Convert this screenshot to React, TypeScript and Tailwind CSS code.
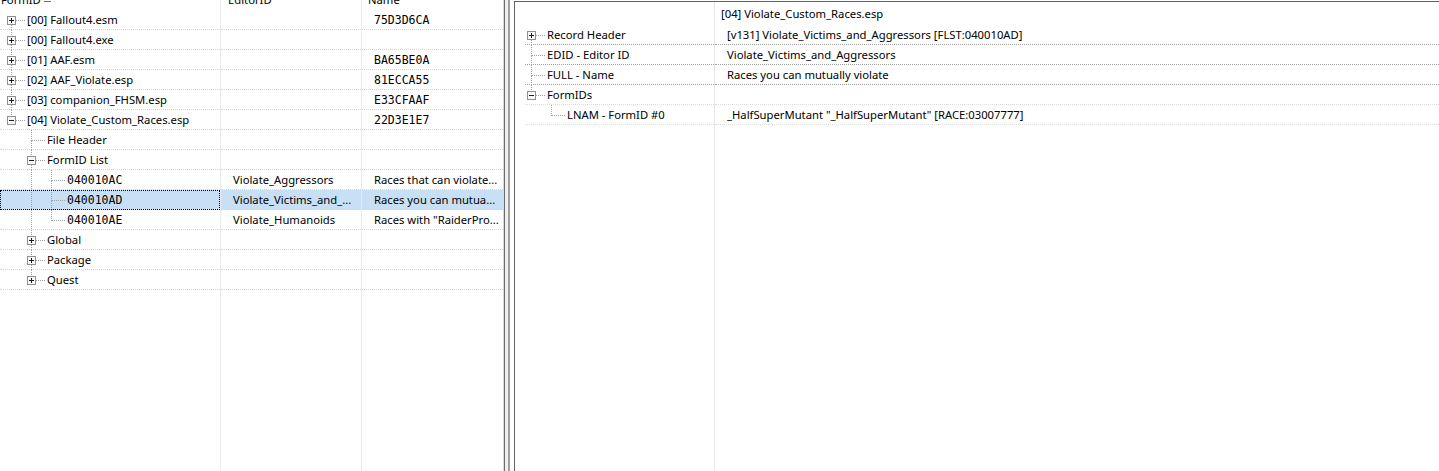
import React from "react";

type TreeProps = {
  level: number;
  box?: "plus" | "minus";
  first?: boolean;
  last?: boolean;
  anc: boolean[];
  base: number;
};

function Gutter({ level, box, first, last, anc, base }: TreeProps) {
  const c = base + 20 * level;
  const w = c + 16;
  const cx = c + 0.5;
  const dot = {
    stroke: "#a0a0a0",
    strokeDasharray: "1 1",
    strokeWidth: 1,
    shapeRendering: "crispEdges" as const,
  };
  return (
    <svg width={w} height={19} className="shrink-0 overflow-visible">
      {anc.map((on, i) =>
        on ? (
          <line key={i} x1={base + 20 * i + 0.5} y1={0} x2={base + 20 * i + 0.5} y2={20} {...dot} />
        ) : null
      )}
      {!(level === 0 && first) && <line x1={cx} y1={0} x2={cx} y2={box ? 6 : 11} {...dot} />}
      {!last && <line x1={cx} y1={box ? 15 : 11} x2={cx} y2={20} {...dot} />}
      <line x1={box ? c + 5 : c + 1} y1={10.5} x2={c + 14} y2={10.5} {...dot} />
      {box && (
        <g shapeRendering="crispEdges">
          <rect x={c - 3.5} y={6.5} width={8} height={8} fill="#f7f7f7" stroke="#8f8f8f" />
          <line x1={c - 2} y1={10.5} x2={c + 3} y2={10.5} stroke="#1c1c2c" />
          {box === "plus" && <line x1={cx} y1={8} x2={cx} y2={13} stroke="#1c1c2c" />}
        </g>
      )}
    </svg>
  );
}

type LeftRow = {
  label: string;
  level: number;
  box?: "plus" | "minus";
  first?: boolean;
  last?: boolean;
  anc: boolean[];
  mono?: boolean;
  ed?: string;
  name?: string;
  nameMono?: boolean;
  selected?: boolean;
};

const leftRows: LeftRow[] = [
  { label: "[00] Fallout4.esm", level: 0, box: "plus", first: true, anc: [], name: "75D3D6CA", nameMono: true },
  { label: "[00] Fallout4.exe", level: 0, box: "plus", anc: [] },
  { label: "[01] AAF.esm", level: 0, box: "plus", anc: [], name: "BA65BE0A", nameMono: true },
  { label: "[02] AAF_Violate.esp", level: 0, box: "plus", anc: [], name: "81ECCA55", nameMono: true },
  { label: "[03] companion_FHSM.esp", level: 0, box: "plus", anc: [], name: "E33CFAAF", nameMono: true },
  { label: "[04] Violate_Custom_Races.esp", level: 0, box: "minus", last: true, anc: [], name: "22D3E1E7", nameMono: true },
  { label: "File Header", level: 1, anc: [false] },
  { label: "FormID List", level: 1, box: "minus", anc: [false] },
  { label: "040010AC", level: 2, anc: [false, true], mono: true, ed: "Violate_Aggressors", name: "Races that can violate..." },
  { label: "040010AD", level: 2, anc: [false, true], mono: true, ed: "Violate_Victims_and_...", name: "Races you can mutua...", selected: true },
  { label: "040010AE", level: 2, last: true, anc: [false, true], mono: true, ed: "Violate_Humanoids", name: "Races with \"RaiderPro..." },
  { label: "Global", level: 1, box: "plus", anc: [false] },
  { label: "Package", level: 1, box: "plus", anc: [false] },
  { label: "Quest", level: 1, box: "plus", last: true, anc: [false] },
];

const SEL = "bg-[#c8e0f6]";
const MONO = "font-['DejaVu_Sans_Mono',monospace] text-[11.5px] pt-[2px]";

function HeaderCell({ children, pl }: { children?: React.ReactNode; pl: string }) {
  return (
    <div className="h-[10px] shrink-0 overflow-hidden">
      <div className={`-mt-[12px] flex h-[23px] items-center whitespace-nowrap ${pl}`}>{children}</div>
    </div>
  );
}

function LeftPanel() {
  return (
    <div className="flex h-full w-[504px] shrink-0 border-r border-[#dadada]">
      {/* FormID column */}
      <div className="flex w-[221px] shrink-0 flex-col border-r border-[#ebebeb]">
        <HeaderCell pl="pl-px">
          <span>FormID</span>
          <span className="ml-[3px] h-[5px] w-[7px] self-center border-b border-[#6d6d6d]" />
        </HeaderCell>
        {leftRows.map((r, i) => (
          <div
            key={i}
            className={`flex h-[20px] shrink-0 items-center border-b border-dotted border-[#d6d6d6] whitespace-nowrap ${
              r.selected ? `${SEL} outline-1 -outline-offset-1 outline-dotted outline-black` : ""
            }`}
          >
            <Gutter level={r.level} box={r.box} first={r.first} last={r.last} anc={r.anc} base={11} />
            <span className={r.mono ? MONO : ""}>{r.label}</span>
          </div>
        ))}
      </div>
      {/* EditorID column */}
      <div className="flex w-[141px] shrink-0 flex-col border-r border-[#ebebeb]">
        <HeaderCell pl="pl-[7px]">EditorID</HeaderCell>
        {leftRows.map((r, i) => (
          <div
            key={i}
            className={`flex h-[20px] shrink-0 items-center border-b border-dotted border-[#d6d6d6] pl-[12px] whitespace-nowrap ${
              r.selected ? SEL : ""
            }`}
          >
            {r.ed ?? ""}
          </div>
        ))}
      </div>
      {/* Name column */}
      <div className="flex min-w-0 flex-1 flex-col">
        <HeaderCell pl="pl-[6px]">Name</HeaderCell>
        {leftRows.map((r, i) => (
          <div
            key={i}
            className={`flex h-[20px] shrink-0 items-center border-b border-dotted border-[#d6d6d6] pl-[12px] whitespace-nowrap ${
              r.selected ? SEL : ""
            }`}
          >
            <span className={r.nameMono ? MONO : ""}>{r.name ?? ""}</span>
          </div>
        ))}
      </div>
    </div>
  );
}

type RightRow = {
  label: string;
  value: string;
  level: number;
  box?: "plus" | "minus";
  first?: boolean;
  last?: boolean;
  anc: boolean[];
  line: string;
};

const rightRows: RightRow[] = [
  { label: "Record Header", value: "[v131] Violate_Victims_and_Aggressors [FLST:040010AD]", level: 0, box: "plus", first: true, anc: [], line: "border-[#a0a0a0]" },
  { label: "EDID - Editor ID", value: "Violate_Victims_and_Aggressors", level: 0, anc: [], line: "border-[#a0a0a0]" },
  { label: "FULL - Name", value: "Races you can mutually violate", level: 0, anc: [], line: "border-[#a0a0a0]" },
  { label: "FormIDs", value: "", level: 0, box: "minus", last: true, anc: [], line: "border-[#dcdcdc]" },
  { label: "LNAM - FormID #0", value: "_HalfSuperMutant \"_HalfSuperMutant\" [RACE:03007777]", level: 1, last: true, anc: [false], line: "border-[#dcdcdc]" },
];

function RightPanel() {
  return (
    <div className="mt-px flex min-w-0 flex-1 border-l border-t border-[#646464]">
      <div className="flex w-[200px] shrink-0 flex-col border-r border-[#e6e6e6]">
        <div className="h-[23px] shrink-0" />
        {rightRows.map((r, i) => (
          <div key={i} className="flex h-[20px] shrink-0 flex-col">
            <div className="flex min-h-0 flex-1 items-center whitespace-nowrap">
              <Gutter level={r.level} box={r.box} first={r.first} last={r.last} anc={r.anc} base={16} />
              <span>{r.label}</span>
            </div>
            <div className={`ml-[10px] h-px border-t border-dotted ${r.line}`} />
          </div>
        ))}
      </div>
      <div className="flex min-w-0 flex-1 flex-col">
        <div className="flex h-[23px] shrink-0 items-center pl-[6px] whitespace-nowrap">[04] Violate_Custom_Races.esp</div>
        {rightRows.map((r, i) => (
          <div
            key={i}
            className={`flex h-[20px] shrink-0 items-center border-b border-dotted pl-[12px] whitespace-nowrap ${r.line}`}
          >
            {r.value}
          </div>
        ))}
      </div>
    </div>
  );
}

export default function App() {
  return (
    <div className="flex h-[471px] w-[1439px] overflow-hidden bg-white font-['Noto_Sans',sans-serif] text-[11.25px] leading-none text-black">
      <LeftPanel />
      <div className="w-px shrink-0 bg-[#696969]" />
      <div className="w-[3px] shrink-0 bg-[#f0f0f0]" />
      <div className="w-[2px] shrink-0 bg-[#a0a0a0]" />
      <div className="w-[4px] shrink-0 bg-white" />
      <RightPanel />
    </div>
  );
}
